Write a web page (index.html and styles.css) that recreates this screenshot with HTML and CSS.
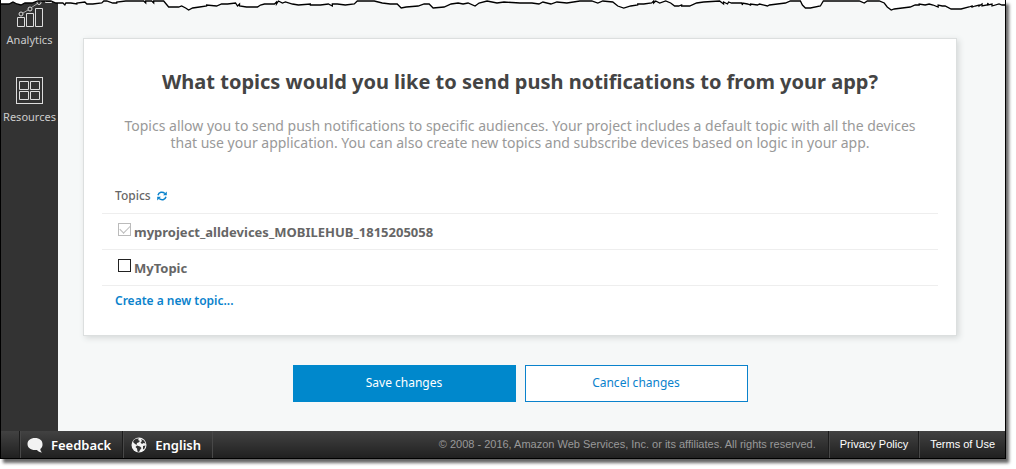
FILE: index.html
```html
<!DOCTYPE html>
<html lang="en">
<head>
<meta charset="utf-8">
<title>Push notification topics</title>
<link rel="stylesheet" href="styles.css">
</head>
<body>
<div class="frame">
  <svg class="torn-edge" viewBox="0 0 1006 12" preserveAspectRatio="none" aria-hidden="true">
    <path class="torn-fill" d="M0 0V4H8L12 2L16 4L20 5L24 3L31 3L37 1L50 1L55 3H62L65 5L70 3L76 4L84 2L92 4L101 3L106 1L116 3L125 1H143L145 3L147 1L151 3L153 1H163L168 7L178 7L181 6L185 8L188 10L192 8L199 7L206 6L216 6L221 4L227 4L235 3L237 6L239 4L246 7L257 7L264 4L274 4L278 1L282 3L285 2L292 4L298 5L310 4L320 5L328 4L332 6L337 4L345 5L354 4L357 1H378L382 3L390 4L397 4L401 8L406 7L418 6L424 4L429 4L433 8L444 7L451 4L458 3L463 4L468 3L475 6L479 3L487 1L497 3L504 2L520 3L532 3L539 4L543 2L551 4L557 2L567 3L580 1H592L598 3L603 1L613 2L618 6L624 8L631 6L638 5L644 4L652 3L656 1L660 3L666 1L675 6L690 6L697 3L720 1L724 4L729 2L735 4L743 3L748 4L758 5L768 5L778 4L786 3L791 1H801L806 8H815L824 1H860L865 3L868 1H880L885 3L892 10L899 8L911 7L920 4L934 5L941 8L946 6L952 9H962L970 7L980 5L988 5L994 5L1000 5L1006 4V0Z"/>
    <path class="torn-line" d="M0 4H8L12 2L16 4L20 5L24 3L31 3L37 1L50 1L55 3H62L64 5L65 3L70 3L76 4V3L84 2L86 4L92 4L101 3L103 1L106 1L112 3L116 3V2L125 1H143L145 3V1L151 1L153 3V1H163L168 7L178 7L181 6L185 8L188 10L192 8L199 7L206 6V5L216 6L221 4L227 4L235 3L237 6L239 4V6L246 7L257 7L260 5L264 4L274 4L276 2V4L278 1L282 3L285 2L292 4L298 5L310 4V5L320 5L328 4L332 6V4L337 4L345 5L354 4L357 1H374L378 2L382 3L390 4L397 4L401 8L406 7L418 6L424 4L429 4L433 8L444 7L451 4L458 3L463 4L468 3L475 6L479 3L487 1L497 3L504 2L520 3L532 3L539 4L543 2L551 4L557 2L567 3L580 1H592L598 3L603 1L613 2L618 6L624 8L631 6L638 5V4L644 4L652 3L654 1V3L656 1L660 3L666 1L671 3L675 6H679L682 5V6L690 6L697 3L704 2L720 1L724 4V2L728 4L729 2L732 3H742L743 5V3L748 4L751 5V4L758 5L760 4L768 6L770 5L778 4L786 3L791 1H801L803 5L806 8H811L821 6L824 1H860L865 3L868 1H880L885 3L888 7L892 10L895 9L911 7L916 5H920L920 4L926 5L930 4L934 5L939 7V5L943 6L946 6L952 9H962L970 7L973 6V7L976 6L980 5V6L983 4V6L988 5L989 3V5L993 4V6L1000 4L1003 5H1006"/>
  </svg>
  <div class="workspace">
    <nav class="sidebar" aria-label="Project">
      <a class="side-link" href="#analytics">
        <svg class="analytics-icon" viewBox="0 0 37 27" aria-hidden="true">
          <path d="M6.500 17.500h7v9h-7zM15.500 13.500h7v13h-7zM24.500 8.500h7v18h-7zM34.500-2.500h6v5h-6z"/>
          <path class="thin" d="M12 13l5-3M20.500 7.500l6-4"/>
          <circle cx="10" cy="14" r="2"/><circle cx="19" cy="9" r="2"/><circle cx="28" cy="2.500" r="2"/>
        </svg>
        <span>Analytics</span>
      </a>
      <a class="side-link" href="#resources">
        <svg class="resources-icon" viewBox="0 0 27 27" aria-hidden="true">
          <rect x=".5" y=".5" width="26" height="26"/>
          <path d="M3.500 4.500h9v8h-9zM14.500 4.500h9v8h-9zM3.500 14.500h9v8h-9zM14.500 14.500h9v8h-9z"/>
        </svg>
        <span>Resources</span>
      </a>
    </nav>
    <main class="content">
      <section class="card">
        <h1>What topics would you like to send push notifications to from your app?</h1>
        <p class="intro">Topics allow you to send push notifications to specific audiences. Your project includes a default topic with all the devices that use your application. You can also create new topics and subscribe devices based on logic in your app.</p>
        <div class="topics">
          <div class="row heading-row">
            <h2>Topics</h2>
            <button class="refresh" type="button" aria-label="Refresh topics">
              <svg viewBox="0 0 10 10" aria-hidden="true">
                <path class="arc" d="M1 4.200C1.800 1 5.500.3 7.900 2.500M9 5.800C8.200 9 4.500 9.700 2.100 7.500"/>
                <path class="tip" d="M9.800.5v3.800H6zM.2 9.500V5.700H4z"/>
              </svg>
            </button>
          </div>
          <label class="row"><input type="checkbox" checked disabled><span>myproject_alldevices_MOBILEHUB_1815205058</span></label>
          <label class="row"><input type="checkbox"><span>MyTopic</span></label>
          <a class="create" href="#new-topic">Create a new topic...</a>
        </div>
      </section>
      <div class="actions">
        <button class="button primary" type="button">Save changes</button>
        <button class="button" type="button">Cancel changes</button>
      </div>
    </main>
  </div>
  <footer class="footer">
    <button class="tool feedback" type="button">
      <svg viewBox="0 0 16 16" aria-hidden="true"><path d="M8 1C3.500 1 .5 3.500.5 7S3.500 13 8 13c.8 0 1.400 0 2 0 1 1.500 3 2.300 5 2.500-1-1-1.700-2.300-1.700-3.600C15 10.700 15.700 9 15.500 7 15.500 3.500 12.500 1 8 1z"/></svg>
      <span>Feedback</span>
    </button>
    <button class="tool language" type="button">
      <svg viewBox="0 0 16 16" aria-hidden="true"><circle cx="8" cy="8" r="7.500"/><path class="land" d="M5 1.800L8 1.500 7 3 9 4 7.500 5.500 6 6 5.500 8 3.500 6.500 2 5 3 3zM10 2l3 1.500 1.500 3-2-.5-1.500 1-1.500-1.500L11 4zM6 8.500l3 1 1.500 1.500-1.500 2-1 2-1.500-.5-.5-3-1.500-1.500zM12 9l2.500-.5-1 3-1.500 1z"/></svg>
      <span>English</span>
    </button>
    <span class="copyright">© 2008 - 2016, Amazon Web Services, Inc. or its affiliates. All rights reserved.</span>
    <a class="legal" href="#privacy">Privacy Policy</a>
    <a class="legal" href="#terms">Terms of Use</a>
  </footer>
</div>
</body>
</html>
```
FILE: styles.css
```css
* { box-sizing: border-box; }

body {
  margin: 0;
  background: #fff;
  font-family: "Noto Sans", sans-serif;
}

button { font-family: inherit; cursor: pointer; }
a { text-decoration: none; }

.frame {
  position: relative;
  display: flex;
  flex-direction: column;
  min-height: calc(100vh - 10px);
  margin: 0 10px 10px 0;
  border: 1px solid #000;
  border-top: 0;
  background: #f6f8f8;
  box-shadow: 3px 4px 3px #666;
}

.torn-edge {
  position: absolute;
  top: 0;
  left: 0;
  width: 100%;
  height: 12px;
}
.torn-fill { fill: #fff; }
.torn-line { fill: none; stroke: #000; stroke-width: 1.300; }

.workspace { display: flex; flex: 1; }

.sidebar {
  display: flex;
  flex-direction: column;
  gap: 29px;
  width: 57px;
  background: #333;
}
.side-link {
  display: flex;
  flex-direction: column;
  align-items: center;
  gap: 5px;
  color: #ccc;
  font-size: 11px;
  line-height: 16px;
}
.side-link svg { fill: none; stroke: #ddd; stroke-width: 1; }
.side-link .thin { stroke: #aaa; }
.analytics-icon { width: 37px; height: 27px; overflow: visible; }
.resources-icon { width: 27px; height: 27px; }

.content {
  flex: 1;
  padding: 38px 48px 28px 25px;
}

.card {
  padding: 28px 18px 24px;
  border: 1px solid #dcdfdf;
  background: #fff;
  box-shadow: 2px 2px 6px #d5d8d8;
}
h1 {
  margin: 0;
  color: #444;
  font-size: 20px;
  font-weight: 700;
  line-height: 30px;
  text-align: center;
}
.intro {
  max-width: 800px;
  margin: 20px auto 27px;
  color: #999;
  font-size: 14px;
  line-height: 17px;
  text-align: center;
}
.row {
  display: flex;
  align-items: center;
  gap: 3px;
  height: 36px;
  padding-left: 16px;
  border-bottom: 1px solid #eee;
  color: #666;
  font-size: 13px;
  font-weight: 700;
}
.heading-row {
  gap: 6px;
  padding-left: 13px;
}
h2 {
  margin: 0;
  font-size: 12px;
  font-weight: 500;
}
.refresh {
  display: flex;
  padding: 0;
  border: 0;
  background: none;
}
.refresh svg { width: 10px; height: 10px; }
.arc { fill: none; stroke: #0a82cc; stroke-width: 1.500; }
.tip { fill: #0a82cc; }

input {
  display: grid;
  place-items: center;
  width: 13px;
  height: 13px;
  margin: 0 0 4px;
  border: 1px solid #222;
  background: #fff;
  appearance: none;
}
input:disabled { border-color: #bbb; }
input:checked::after {
  content: "";
  width: 9px;
  height: 5px;
  margin-bottom: 3px;
  border: solid #bbb;
  border-width: 0 0 1px 1px;
  transform: rotate(-45deg);
}
.create {
  display: inline-block;
  margin: 5px 0 0 13px;
  color: #0a82cc;
  font-size: 12px;
  font-weight: 600;
  line-height: 20px;
}

.actions {
  display: flex;
  justify-content: center;
  gap: 9px;
  margin-top: 29px;
}
.button {
  width: 223px;
  height: 37px;
  padding-bottom: 3px;
  border: 1px solid #0a82cc;
  background: #fff;
  color: #0a82cc;
  font-size: 12px;
}
.primary {
  border-color: #08c;
  background: #08c;
  color: #fff;
}

.footer {
  display: flex;
  align-items: stretch;
  height: 27px;
  padding-left: 18px;
  background: linear-gradient(#424242, #202020);
  color: #fff;
}
.tool {
  display: flex;
  align-items: center;
  gap: 8px;
  padding: 0 11px 0 7px;
  border: 0;
  border-left: 1px solid #1c1c1c;
  background: none;
  box-shadow: inset 1px 0 #484848;
  color: #fff;
  font-size: 13px;
  font-weight: 600;
}
.tool svg { width: 16px; height: 16px; fill: #f2f2f2; }
.tool .land { fill: #333; }
.language { padding-left: 8px; border-right: 1px solid #484848; }
.copyright {
  margin-left: auto;
  padding-right: 12px;
  color: #999;
}
.legal {
  padding: 0 10px 0 11px;
  border-left: 1px solid #1c1c1c;
  box-shadow: inset 1px 0 #484848;
  color: #fff;
}
.copyright, .legal {
  font-family: "Liberation Sans", Arial, sans-serif;
  font-size: 11px;
  line-height: 27px;
}
```
